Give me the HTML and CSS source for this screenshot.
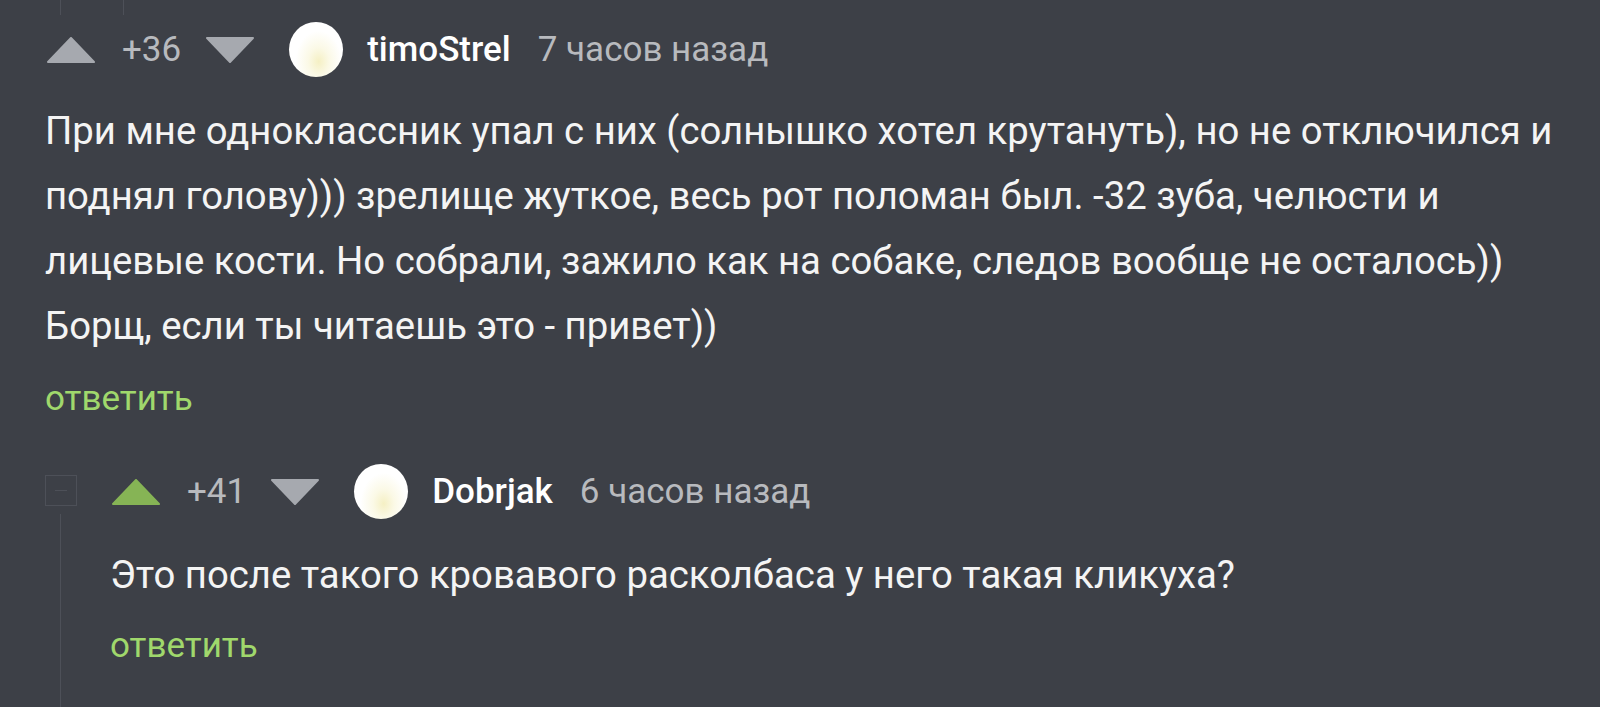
FILE: index.html
```html
<!DOCTYPE html>
<html lang="ru">
<head>
<meta charset="utf-8">
<title>Комментарии</title>
<link rel="stylesheet" href="styles.css">
</head>
<body>
<div class="page">
  <div class="prev-lines">
    <span class="prev-line prev-line-a"></span>
    <span class="prev-line prev-line-b"></span>
  </div>

  <div class="comment">
    <div class="head">
      <button class="vote vote-up" aria-label="плюс">
        <svg width="48" height="26" viewBox="0 0 48 26"><polygon points="1,25 24,1 47,25" /></svg>
      </button>
      <span class="rating">+36</span>
      <button class="vote vote-down" aria-label="минус">
        <svg width="48" height="26" viewBox="0 0 48 26"><polygon points="1,1 47,1 24,25" /></svg>
      </button>
      <span class="avatar"></span>
      <span class="user">timoStrel</span>
      <span class="time">7 часов назад</span>
    </div>
    <div class="text">При мне одноклассник упал с них (солнышко хотел крутануть), но не отключился и поднял голову))) зрелище жуткое, весь рот поломан был. -32 зуба, челюсти и лицевые кости. Но собрали, зажило как на собаке, следов вообще не осталось)) Борщ, если ты читаешь это - привет))</div>
    <div class="reply">ответить</div>
  </div>

  <div class="comment child">
    <div class="thread">
      <span class="collapse"><span class="collapse-minus"></span></span>
      <span class="thread-line"></span>
    </div>
    <div class="child-body">
      <div class="head">
        <button class="vote vote-up active" aria-label="плюс">
          <svg width="48" height="26" viewBox="0 0 48 26"><polygon points="1,25 24,1 47,25" /></svg>
        </button>
        <span class="rating">+41</span>
        <button class="vote vote-down" aria-label="минус">
          <svg width="48" height="26" viewBox="0 0 48 26"><polygon points="1,1 47,1 24,25" /></svg>
        </button>
        <span class="avatar"></span>
        <span class="user">Dobrjak</span>
        <span class="time">6 часов назад</span>
      </div>
      <div class="text">Это после такого кровавого расколбаса у него такая кликуха?</div>
      <div class="reply">ответить</div>
    </div>
  </div>
</div>
</body>
</html>
```

FILE: styles.css
```css
html, body {
  margin: 0;
  padding: 0;
  background: #3d4047;
  height: 100%;
  overflow: hidden;
}

.page {
  font-family: Roboto, "Liberation Sans", sans-serif;
  font-size: 35px;
  color: #eeeeee;
  padding: 0 36px 0 45px;
}

.prev-lines {
  position: relative;
  height: 22px;
}

.prev-line {
  position: absolute;
  top: 0;
  width: 1px;
  height: 15px;
  background: #4d5058;
}

.prev-line-a { left: 15px; }
.prev-line-b { left: 78px; }

.head {
  display: flex;
  align-items: center;
  height: 55px;
}

.vote {
  border: 0;
  padding: 0;
  margin: 0 0 0 2px;
  background: none;
  display: flex;
  align-items: center;
}

.vote svg polygon {
  fill: #a6a9af;
  stroke: #a6a9af;
  stroke-width: 2;
  stroke-linejoin: round;
}

.vote-up.active svg polygon {
  fill: #86b455;
  stroke: #86b455;
}

.rating {
  color: #b8babe;
  margin-left: 27px;
  margin-right: 25px;
}

.vote-down {
  margin-left: 0;
}

.avatar {
  width: 54px;
  height: 55px;
  border-radius: 50%;
  margin-left: 35px;
  background: radial-gradient(ellipse at 55% 72%, #f5f0c4 0%, #fbf9e6 25%, #ffffff 55%);
}

.user {
  font-weight: 500;
  color: #ffffff;
  margin-left: 24px;
}

.time {
  color: #b8babe;
  margin-left: 27px;
}

.text {
  margin-top: 21px;
  font-size: 38.3px;
  line-height: 65px;
  color: #f4f4f4;
}

.reply {
  margin-top: 8px;
  line-height: 65px;
  color: #a0d86c;
}

.comment.child {
  display: grid;
  grid-template-columns: 65px 1fr;
  margin-top: 33px;
}

.child-body {
  padding-bottom: 31px;
}

.child-body .text {
  margin-top: 23px;
}

.child-body .reply {
  margin-top: 6px;
}

.thread {
  display: flex;
  flex-direction: column;
  align-items: flex-start;
  padding-top: 11px;
}

.collapse {
  box-sizing: border-box;
  width: 32px;
  height: 31px;
  border: 1px solid #4d5058;
  display: flex;
  align-items: center;
  justify-content: center;
}

.collapse-minus {
  width: 12px;
  height: 1px;
  background: #4d5058;
}

.thread-line {
  width: 1px;
  flex: 1;
  margin-left: 15px;
  margin-top: 8px;
  background: #4d5058;
}
```
